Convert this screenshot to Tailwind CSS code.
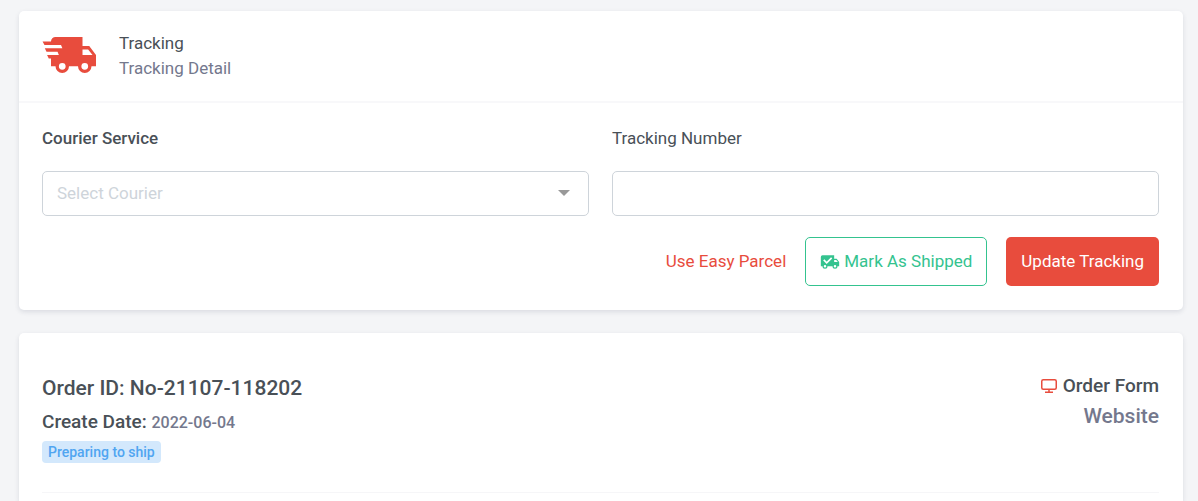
<!DOCTYPE html>
<html lang="en">
<head>
<meta charset="utf-8">
<meta name="viewport" content="width=device-width, initial-scale=1">
<title>Order Tracking</title>
<script src="https://cdn.jsdelivr.net/npm/@tailwindcss/browser@4"></script>
</head>
<body class="bg-[#f4f5f7] font-[Roboto,sans-serif] text-[17px] leading-[25px] text-[#495057]">
<main class="flex flex-col gap-[23px] pt-[11px] pr-[15px] pl-[19px]">
  <section class="rounded-[5px] bg-white shadow-[0_2px_5px_rgba(30,40,70,0.12)]">
    <header class="flex items-center gap-[23px] border-b-2 border-[#f8f8fa] pt-[17px] pr-6 pb-[19px] pl-[23px]">
      <svg class="size-[54px] shrink-0 fill-[#e84c3d]" viewBox="0 0 24 24" aria-hidden="true"><path d="M3 13.5 2.25 12H7.5L6.9 10.5H2L1.25 9H9.05L8.45 7.5H1.11L.25 6H4A2 2 0 0 1 6 4H18V8H21L24 12V17H22A3 3 0 0 1 16 17H12A3 3 0 0 1 6 17H4V13.5H3M19 18.5A1.5 1.5 0 0 0 19 15.5A1.5 1.5 0 0 0 19 18.5M20.5 9.5H18V12H22.46L20.5 9.5M9 18.5A1.5 1.5 0 0 0 9 15.5A1.5 1.5 0 0 0 9 18.5Z"/></svg>
      <div class="pt-[2px]">
        <h1>Tracking</h1>
        <p class="text-[#74788d]">Tracking Detail</p>
      </div>
    </header>
    <form class="pt-[23px] pr-6 pb-6 pl-[23px]">
      <div class="grid grid-cols-2 gap-[23px]">
        <div>
          <label for="courier" class="mb-5 block font-medium">Courier Service</label>
          <div class="relative">
            <select id="courier" class="block h-[45px] w-full appearance-none rounded-[5px] border border-[#ced4da] bg-white px-[14px] text-[#ced4da]">
              <option>Select Courier</option>
            </select>
            <svg class="pointer-events-none absolute top-[19px] right-[19px] h-[6px] w-3 fill-[#999]" viewBox="0 0 12 6" aria-hidden="true"><path d="M0 0H12L6 6Z"/></svg>
          </div>
        </div>
        <div>
          <label for="number" class="mb-5 block">Tracking Number</label>
          <input id="number" type="text" class="block h-[45px] w-full rounded-[5px] border border-[#ced4da] bg-white px-[14px]">
        </div>
      </div>
      <div class="mt-[21px] flex items-center justify-end gap-[19px]">
        <a href="#" class="text-[#e84c3d]">Use Easy Parcel</a>
        <button type="button" class="flex h-[49px] items-center gap-1 rounded-[5px] border border-[#34c38f] px-[14px] text-[#34c38f]">
          <svg class="size-5" viewBox="0 0 24 24" aria-hidden="true"><path fill="currentColor" d="M18 18.5A1.5 1.5 0 0 0 18 15.5A1.5 1.5 0 0 0 18 18.5M19.5 9.5H17V12H21.46L19.5 9.5M6 18.5A1.5 1.5 0 0 0 6 15.5A1.5 1.5 0 0 0 6 18.5M20 8L23 12V17H21A3 3 0 0 1 15 17H9A3 3 0 0 1 3 17H1V6A2 2 0 0 1 3 4H17V8H20Z"/><path fill="none" stroke="white" stroke-width="2" d="M4.5 9.5 8 13 14 7"/></svg>
          Mark As Shipped
        </button>
        <button type="submit" class="h-[49px] rounded-[5px] bg-[#e84c3d] px-[15px] text-white">Update Tracking</button>
      </div>
    </form>
  </section>

  <section class="rounded-t-[5px] bg-white pt-10 pr-6 pb-2 pl-[23px] font-medium shadow-[0_2px_5px_rgba(30,40,70,0.12)]">
    <div class="flex items-start justify-between border-b border-[#f6f6f8] pb-[29px]">
      <div>
        <h2 class="mt-[3px] text-[21px]">Order ID: No-21107-118202</h2>
        <p class="mt-2 text-[19px]">Create Date: <span class="text-[16px] text-[#74788d]">2022-06-04</span></p>
        <span class="mt-[6px] block w-fit rounded-[4px] bg-[#d3e8fc] px-[6px] text-[14px] leading-[22px] text-[#50a5f1]">Preparing to ship</span>
      </div>
      <div class="text-right">
        <h3 class="flex items-center justify-end gap-[6px] text-[19px]">
          <svg class="h-[14px] w-4" viewBox="0 0 16 14" fill="none" stroke="#e84c3d" stroke-width="1.5" aria-hidden="true"><rect x=".75" y=".75" width="14.5" height="9.5" rx="1.5"/><path d="M8 10.5V13M4 13.25H12"/></svg>
          Order Form
        </h3>
        <p class="mt-[6px] text-[21px] text-[#74788d]">Website</p>
      </div>
    </div>
  </section>
</main>
</body>
</html>
